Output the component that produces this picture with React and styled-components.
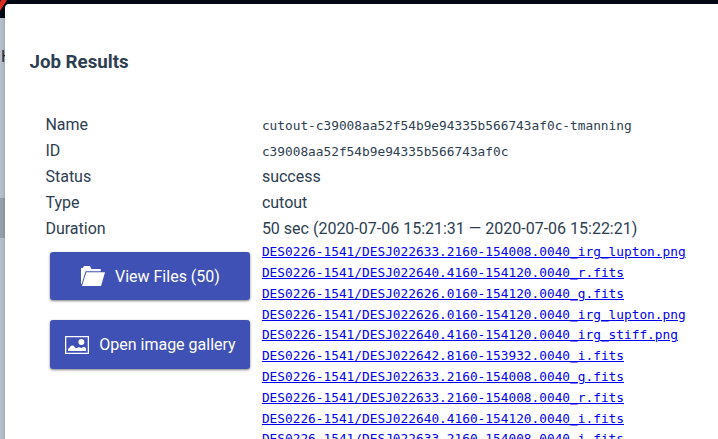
import React from "react";
import styled, { createGlobalStyle } from "styled-components";

const GlobalStyle = createGlobalStyle`
  *, *::before, *::after { box-sizing: border-box; }
  body {
    margin: 0;
    overflow: hidden;
    font-family: Roboto, "Noto Sans", sans-serif;
    font-size: 16px;
    color: #2c3e50;
  }
`;

const Page = styled.div`
  position: relative;
  height: 439px;
  overflow: hidden;
  background: #b4bec8;
`;

const Header = styled.header`
  height: 18px;
  background: #020914;
  svg { display: block; }
`;

const PageHeading = styled.div`
  height: 180px;
  padding: 28px 0 0 1px;
  line-height: 21px;
  color: #1f2b38;
`;

const SelectedRow = styled.div`
  height: 40px;
  background: #949ea8;
`;

const Dialog = styled.section`
  position: absolute;
  top: 4px;
  left: 5px;
  right: -20px;
  height: 600px;
  padding: 46px 24px 0 24.45px;
  border-radius: 4px;
  background: #fff;
  box-shadow: 0 0 3px rgba(0, 0, 0, 0.25);
`;

const Title = styled.h3`
  margin: 0;
  font-size: 18.72px;
  line-height: 24px;
  font-weight: 700;
`;

const Details = styled.div`
  display: grid;
  grid-template-columns: 216.45px 1fr;
  margin: 38px 0 0 16px;
`;

const Cell = styled.div`
  height: 26px;
  line-height: 26px;
  white-space: nowrap;
`;

const Mono = styled.span`
  font-family: "DejaVu Sans Mono", monospace;
  font-size: 12.8px;
`;

const Actions = styled.div`
  display: flex;
  flex-direction: column;
  align-items: flex-start;
  gap: 20px;
  padding: 10px 0 0 5px;
`;

const ActionButton = styled.button`
  display: flex;
  align-items: center;
  justify-content: center;
  gap: ${(p) => p.$gap}px;
  width: 200px;
  height: ${(p) => p.$height}px;
  padding: 0;
  border: 0;
  border-radius: 3px;
  background: #3f51b5;
  color: #fff;
  font: 400 16px Roboto, sans-serif;
  box-shadow: 0 1px 3px rgba(0, 0, 0, 0.3), 0 1px 2px rgba(0, 0, 0, 0.24);
  svg { display: block; flex: none; }
`;

const Files = styled.ul`
  margin: -0.8px 0 0;
  padding: 0;
  list-style: none;
`;

const FileItem = styled.li`
  height: 20.8px;
  line-height: 20.8px;
  white-space: nowrap;
`;

const FileLink = styled.a`
  font-family: "DejaVu Sans Mono", monospace;
  font-size: 12.8px;
  color: #0000ee;
  text-decoration: underline;
`;

const FolderIcon = () => (
  <svg width="24" height="20" viewBox="0 0 24 20" fill="#fff">
    <path d="M0 18V2h1.8L3 0h6l1.4 3h9.3v2.2H4.6L.7 18z" />
    <path d="M5.3 6.2H24L20 20H1z" />
  </svg>
);

const GalleryIcon = () => (
  <svg width="24" height="18" viewBox="0 0 24 18" fill="#fff">
    <path fillRule="evenodd" d="M0 0h24v18H0zM1.3 1.3v15.4h21.4V1.3z" />
    <circle cx="16.4" cy="6" r="3" />
    <path d="M3 15v-2.2c1-.2 1.3-1.1 2.1-2 1-1.1 2.1-1.5 3.3-1 1.1.5 1.5 2.1 2.7 2.2 1.1.1 1.5-.9 2.7-.8 1.1 0 1.6.8 2.7.7 1-.1 1.3-.8 2.2-.8 1.2 0 2.3.8 2.3 2V15z" />
  </svg>
);

const files = [
  "DESJ022633.2160-154008.0040_irg_lupton.png",
  "DESJ022640.4160-154120.0040_r.fits",
  "DESJ022626.0160-154120.0040_g.fits",
  "DESJ022626.0160-154120.0040_irg_lupton.png",
  "DESJ022640.4160-154120.0040_irg_stiff.png",
  "DESJ022642.8160-153932.0040_i.fits",
  "DESJ022633.2160-154008.0040_g.fits",
  "DESJ022633.2160-154008.0040_r.fits",
  "DESJ022640.4160-154120.0040_i.fits",
  "DESJ022633.2160-154008.0040_i.fits",
];

const details = [
  ["Name", "cutout-c39008aa52f54b9e94335b566743af0c-tmanning", true],
  ["ID", "c39008aa52f54b9e94335b566743af0c", true],
  ["Status", "success"],
  ["Type", "cutout"],
  ["Duration", "50 sec (2020-07-06 15:21:31 — 2020-07-06 15:22:21)"],
];

export default function App() {
  return (
    <Page>
      <GlobalStyle />
      <Header>
        <svg width="9" height="12" viewBox="0 0 9 12">
          <path d="M1 0h6L0 11V2z" fill="#d92d20" />
        </svg>
      </Header>
      <PageHeading>H</PageHeading>
      <SelectedRow />
      <Dialog>
        <Title>Job Results</Title>
        <Details>
          {details.map(([label, value, mono]) => (
            <React.Fragment key={label}>
              <Cell>{label}</Cell>
              <Cell>{mono ? <Mono>{value}</Mono> : value}</Cell>
            </React.Fragment>
          ))}
          <Actions>
            <ActionButton $height={48} $gap={10}>
              <FolderIcon />
              View Files (50)
            </ActionButton>
            <ActionButton $height={49} $gap={10}>
              <GalleryIcon />
              Open image gallery
            </ActionButton>
          </Actions>
          <Files>
            {files.map((name) => (
              <FileItem key={name}>
                <FileLink href="#">DES0226-1541/{name}</FileLink>
              </FileItem>
            ))}
          </Files>
        </Details>
      </Dialog>
    </Page>
  );
}
